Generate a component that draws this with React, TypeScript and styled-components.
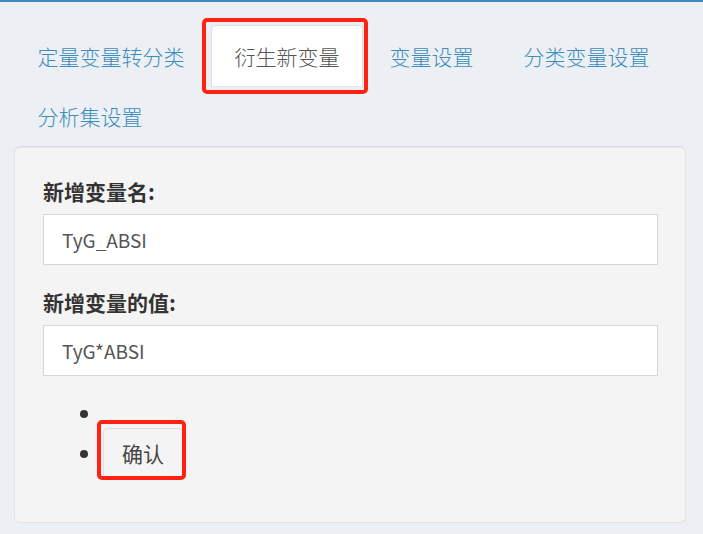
import React, { useState } from 'react';
import styled, { createGlobalStyle } from 'styled-components';

const GlobalStyle = createGlobalStyle`
  html, body {
    margin: 0;
    padding: 0;
    background: #ecf0f5;
  }
  body {
    font-family: "Noto Sans CJK SC", "Noto Sans", sans-serif;
    font-size: 21px;
    line-height: 30px;
    color: #333333;
  }
  * {
    box-sizing: border-box;
  }
`;

const TopBar = styled.div`
  height: 2px;
  background: #3c8dbc;
`;

const Content = styled.div`
  padding: 23px 17px 0 14px;
`;

const TabList = styled.ul`
  display: flex;
  flex-wrap: wrap;
  list-style: none;
  margin: 0;
  padding: 0 0 2px 0;
`;

const TabItem = styled.li`
  margin: 0 3px -2.5px 0;
`;

const TabLink = styled.a<{ $active?: boolean }>`
  position: relative;
  display: block;
  padding: 15px 22.5px;
  line-height: 30px;
  border: 1px solid ${(props) => (props.$active ? '#dddddd' : 'transparent')};
  border-bottom-color: ${(props) => (props.$active ? '#e6e6e6' : 'transparent')};
  border-radius: 5px 5px 0 0;
  background: ${(props) => (props.$active ? '#ffffff' : 'transparent')};
  color: ${(props) => (props.$active ? '#555555' : '#3c8dbc')};
  font-weight: 300;
  cursor: pointer;
  white-space: nowrap;
`;

const Highlight = styled.span<{ $top: number; $right: number; $bottom: number; $left: number }>`
  position: absolute;
  top: ${(props) => props.$top}px;
  right: ${(props) => props.$right}px;
  bottom: ${(props) => props.$bottom}px;
  left: ${(props) => props.$left}px;
  border: 4px solid #ff2214;
  border-radius: 5px;
  pointer-events: none;
`;

const Well = styled.div`
  background: #f4f4f4;
  border: 1px solid #e3e3e3;
  border-top-color: #d9d9d9;
  border-radius: 6px;
  box-shadow: inset 0 1px 1px rgba(0, 0, 0, 0.05);
  padding: 29px 27px 29px 28px;
`;

const FormGroup = styled.div`
  margin-bottom: 22.5px;
`;

const Label = styled.label`
  display: block;
  font-weight: 700;
  color: #333333;
  margin-bottom: 7.5px;
`;

const TextInput = styled.input`
  display: block;
  width: 100%;
  height: 51px;
  padding: 9px 18px;
  font-family: inherit;
  font-size: 19px;
  line-height: 30px;
  color: #555555;
  background: #ffffff;
  border: 1px solid #d2d6de;
  border-radius: 0;
  outline: none;
`;

const ActionList = styled.ul`
  margin: 0 0 15px 0;
  padding-left: 60px;
  color: #333333;
`;

const ActionItem = styled.li`
  min-height: 30px;
`;

const Button = styled.button`
  position: relative;
  font-family: inherit;
  font-size: 21px;
  line-height: 30px;
  padding: 9px 18px;
  color: #444444;
  background: #f4f4f4;
  border: 1px solid #dddddd;
  border-radius: 4px;
  cursor: pointer;
`;

const tabs = ['定量变量转分类', '衍生新变量', '变量设置', '分类变量设置', '分析集设置'];

function App() {
  const [active, setActive] = useState('衍生新变量');
  const [name, setName] = useState('TyG_ABSI');
  const [value, setValue] = useState('TyG*ABSI');

  const tabList = tabs.map((tab) => {
    const isActive = tab === active;
    return (
      <TabItem key={tab}>
        <TabLink $active={isActive} onClick={() => setActive(tab)}>
          {tab}
          {tab === '衍生新变量' && <Highlight $top={-8} $right={-6} $bottom={-8} $left={-10} />}
        </TabLink>
      </TabItem>
    );
  });

  return (
    <>
      <GlobalStyle />
      <TopBar />
      <Content>
        <TabList>{tabList}</TabList>
        <Well>
          <FormGroup>
            <Label htmlFor="new-name">新增变量名:</Label>
            <TextInput id="new-name" value={name} onChange={(e) => setName(e.target.value)} />
          </FormGroup>
          <FormGroup>
            <Label htmlFor="new-value">新增变量的值:</Label>
            <TextInput id="new-value" value={value} onChange={(e) => setValue(e.target.value)} />
          </FormGroup>
          <ActionList>
            <ActionItem />
            <ActionItem>
              <Button>
                确认
                <Highlight $top={-9} $right={-4} $bottom={-3} $left={-7} />
              </Button>
            </ActionItem>
          </ActionList>
        </Well>
      </Content>
    </>
  );
}

export default App;
